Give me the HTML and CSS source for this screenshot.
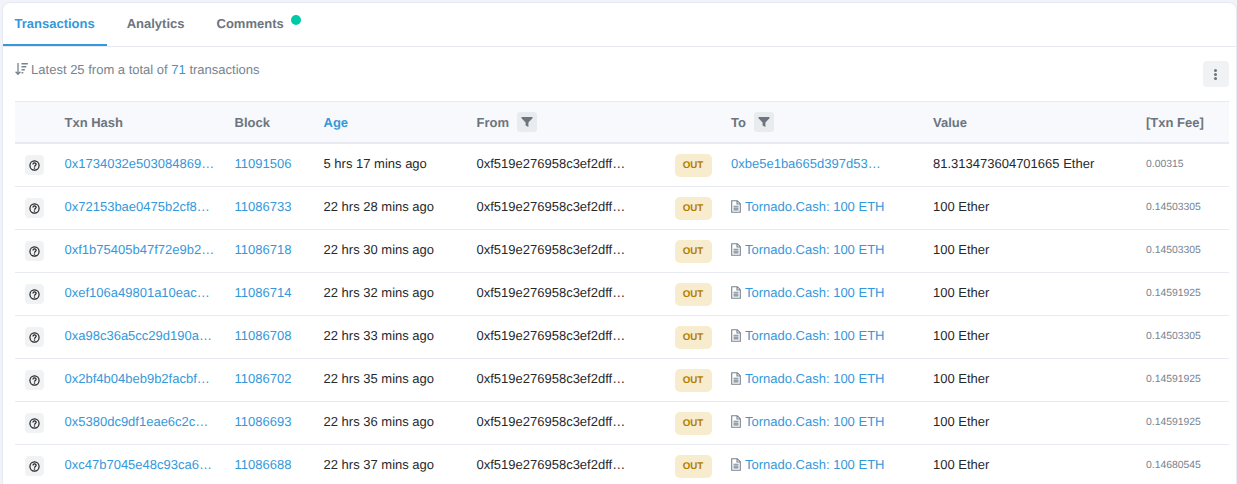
FILE: index.html
```html
<!DOCTYPE html>
<html lang="en">

<head>
    <meta charset="UTF-8">
    <title>Transactions</title>
    <link rel="stylesheet" href="styles.css">
</head>

<body>
    <svg class="defs">
        <symbol id="question" viewBox="0 0 12 12">
            <circle cx="6" cy="6" r="5" fill="none" stroke="currentColor" stroke-width="1.3" />
            <path d="M4.3 4.8c0-2.2 3.5-2.2 3.5-.1 0 1.3-1.7 1.2-1.8 2.6" fill="none" stroke="currentColor" stroke-width="1.3" />
            <rect x="5.3" y="8.1" width="1.4" height="1.4" fill="currentColor" />
        </symbol>
        <symbol id="filter" viewBox="0 0 12 12">
            <path d="M.5 1h11v1.2L7.4 6.4V11L4.6 9.4v-3L.5 2.2z" fill="currentColor" />
        </symbol>
        <symbol id="file" viewBox="0 0 10 13">
            <path d="M.7.7h5.6l3 3v8.6H.7zM6 .9v3.1h3.2M2.5 6.3h5M2.5 8.1h5M2.5 9.9h5" fill="none" stroke="currentColor" stroke-width="1.1" />
        </symbol>
    </svg>

    <div class="card">
        <!-- Tabs -->
        <div class="tabs">
            <a class="tab active">Transactions</a>
            <a class="tab">Analytics</a>
            <a class="tab">Comments<span class="dot"></span></a>
        </div>

        <div class="summary">
            <p class="summary-text">
                <svg class="sort-icon" viewBox="0 0 13 13">
                    <path d="M3 .5v11M.6 9.2 3 11.8l2.4-2.6" fill="none" stroke="currentColor" stroke-width="1.3" />
                    <path d="M6.5 1.2h6.3M6.5 4.2h4.8M6.5 7.2h3.3M6.5 10.2h1.8" fill="none" stroke="currentColor" stroke-width="1.5" />
                </svg>
                Latest 25 from a total of <a>71</a> transactions
            </p>
            <button class="more-btn"><span></span><span></span><span></span></button>
        </div>

        <table class="txn-table">
            <colgroup>
                <col class="c-icon"><col class="c-hash"><col class="c-block"><col class="c-age"><col class="c-from">
                <col class="c-dir"><col class="c-to"><col class="c-value"><col class="c-fee">
            </colgroup>
            <thead>
                <tr>
                    <th></th>
                    <th>Txn Hash</th>
                    <th>Block</th>
                    <th><a>Age</a></th>
                    <th><div class="th-filter">From <span class="filter-btn"><svg><use href="#filter" /></svg></span></div></th>
                    <th></th>
                    <th><div class="th-filter">To <span class="filter-btn"><svg><use href="#filter" /></svg></span></div></th>
                    <th>Value</th>
                    <th>[Txn Fee]</th>
                </tr>
            </thead>
            <tbody>
                <tr>
                    <td><span class="status"><svg><use href="#question" /></svg></span></td>
                    <td><a>0x1734032e503084869…</a></td>
                    <td><a>11091506</a></td>
                    <td>5 hrs 17 mins ago</td>
                    <td>0xf519e276958c3ef2dff…</td>
                    <td><span class="badge">OUT</span></td>
                    <td><a>0xbe5e1ba665d397d53…</a></td>
                    <td>81.313473604701665 Ether</td>
                    <td class="fee">0.00315</td>
                </tr>
                <tr>
                    <td><span class="status"><svg><use href="#question" /></svg></span></td>
                    <td><a>0x72153bae0475b2cf8…</a></td>
                    <td><a>11086733</a></td>
                    <td>22 hrs 28 mins ago</td>
                    <td>0xf519e276958c3ef2dff…</td>
                    <td><span class="badge">OUT</span></td>
                    <td><svg class="file-icon"><use href="#file" /></svg><a>Tornado.Cash: 100 ETH</a></td>
                    <td>100 Ether</td>
                    <td class="fee">0.14503305</td>
                </tr>
                <tr>
                    <td><span class="status"><svg><use href="#question" /></svg></span></td>
                    <td><a>0xf1b75405b47f72e9b2…</a></td>
                    <td><a>11086718</a></td>
                    <td>22 hrs 30 mins ago</td>
                    <td>0xf519e276958c3ef2dff…</td>
                    <td><span class="badge">OUT</span></td>
                    <td><svg class="file-icon"><use href="#file" /></svg><a>Tornado.Cash: 100 ETH</a></td>
                    <td>100 Ether</td>
                    <td class="fee">0.14503305</td>
                </tr>
                <tr>
                    <td><span class="status"><svg><use href="#question" /></svg></span></td>
                    <td><a>0xef106a49801a10eac…</a></td>
                    <td><a>11086714</a></td>
                    <td>22 hrs 32 mins ago</td>
                    <td>0xf519e276958c3ef2dff…</td>
                    <td><span class="badge">OUT</span></td>
                    <td><svg class="file-icon"><use href="#file" /></svg><a>Tornado.Cash: 100 ETH</a></td>
                    <td>100 Ether</td>
                    <td class="fee">0.14591925</td>
                </tr>
                <tr>
                    <td><span class="status"><svg><use href="#question" /></svg></span></td>
                    <td><a>0xa98c36a5cc29d190a…</a></td>
                    <td><a>11086708</a></td>
                    <td>22 hrs 33 mins ago</td>
                    <td>0xf519e276958c3ef2dff…</td>
                    <td><span class="badge">OUT</span></td>
                    <td><svg class="file-icon"><use href="#file" /></svg><a>Tornado.Cash: 100 ETH</a></td>
                    <td>100 Ether</td>
                    <td class="fee">0.14503305</td>
                </tr>
                <tr>
                    <td><span class="status"><svg><use href="#question" /></svg></span></td>
                    <td><a>0x2bf4b04beb9b2facbf…</a></td>
                    <td><a>11086702</a></td>
                    <td>22 hrs 35 mins ago</td>
                    <td>0xf519e276958c3ef2dff…</td>
                    <td><span class="badge">OUT</span></td>
                    <td><svg class="file-icon"><use href="#file" /></svg><a>Tornado.Cash: 100 ETH</a></td>
                    <td>100 Ether</td>
                    <td class="fee">0.14591925</td>
                </tr>
                <tr>
                    <td><span class="status"><svg><use href="#question" /></svg></span></td>
                    <td><a>0x5380dc9df1eae6c2c…</a></td>
                    <td><a>11086693</a></td>
                    <td>22 hrs 36 mins ago</td>
                    <td>0xf519e276958c3ef2dff…</td>
                    <td><span class="badge">OUT</span></td>
                    <td><svg class="file-icon"><use href="#file" /></svg><a>Tornado.Cash: 100 ETH</a></td>
                    <td>100 Ether</td>
                    <td class="fee">0.14591925</td>
                </tr>
                <tr>
                    <td><span class="status"><svg><use href="#question" /></svg></span></td>
                    <td><a>0xc47b7045e48c93ca6…</a></td>
                    <td><a>11086688</a></td>
                    <td>22 hrs 37 mins ago</td>
                    <td>0xf519e276958c3ef2dff…</td>
                    <td><span class="badge">OUT</span></td>
                    <td><svg class="file-icon"><use href="#file" /></svg><a>Tornado.Cash: 100 ETH</a></td>
                    <td>100 Ether</td>
                    <td class="fee">0.14680545</td>
                </tr>
            </tbody>
        </table>
    </div>
</body>

</html>
```

FILE: styles.css
```css
html,
body {
    height: 100%;
}

body {
    margin: 0;
    padding: 2px 0 0 2px;
    box-sizing: border-box;
    overflow: hidden;
    background-color: #f1f3f9;
    font-family: "Liberation Sans", Arial, sans-serif;
    font-size: 13px;
    color: #26292c;
    text-rendering: geometricPrecision;
}

.defs {
    display: none;
}

a {
    color: #3498db;
    text-decoration: none;
}

.card {
    background-color: #fff;
    border: 1px solid #e7eaf3;
    border-radius: 8px 8px 0 0;
    height: 481px;
    overflow: hidden;
}

.tabs {
    display: flex;
    height: 43px;
    border-bottom: 1px solid #e7eaf3;
}

.tab {
    position: relative;
    padding: 13px 12px 0 11.5px;
    margin-right: 8.5px;
    font-weight: bold;
    color: #6c757e;
}

.tab.active {
    color: #3498db;
    box-shadow: inset 0 -2px 0 #3498db;
}

.dot {
    position: absolute;
    top: 12px;
    right: -5px;
    width: 10px;
    height: 10px;
    border-radius: 50%;
    background-color: #00c9a7;
}

.summary {
    display: flex;
    justify-content: space-between;
    align-items: flex-start;
    height: 40px;
    padding: 14px 7px 0 11.5px;
}

.summary-text {
    margin: 0;
    padding-top: 1px;
    color: #77838f;
}

.sort-icon {
    width: 13px;
    height: 14px;
    vertical-align: -2px;
    color: #77838f;
}

.more-btn {
    display: flex;
    flex-direction: column;
    align-items: center;
    justify-content: center;
    gap: 1px;
    width: 26px;
    height: 26px;
    padding: 0 1px 0 0;
    border: none;
    border-radius: 4px;
    background-color: #f1f2f4;
}

.more-btn span {
    width: 3px;
    height: 3px;
    border-radius: 50%;
    background-color: #6c757e;
}

.txn-table {
    width: 1214px;
    margin-left: 12px;
    border-collapse: collapse;
    table-layout: fixed;
}

.c-icon { width: 39.5px; }
.c-hash { width: 170px; }
.c-block { width: 89px; }
.c-age { width: 153px; }
.c-from { width: 199px; }
.c-dir { width: 55.5px; }
.c-to { width: 202px; }
.c-value { width: 213px; }
.c-fee { width: 93px; }

.txn-table th {
    height: 40px;
    padding: 0 10px;
    text-align: left;
    font-weight: bold;
    color: #6c757e;
    background-color: #f8f9fc;
    border-top: 1px solid #e7eaf3;
    border-bottom: 2px solid #e7eaf3;
}

.th-filter {
    display: flex;
    align-items: center;
    gap: 8px;
}

.txn-table td {
    height: 38px;
    padding: 0 10px 4px;
    white-space: nowrap;
    border-bottom: 1px solid #e7eaf3;
}

.txn-table td.fee {
    height: 40px;
    padding-bottom: 2px;
    font-size: 10.4px;
    color: #77838f;
}

.filter-btn {
    display: flex;
    align-items: center;
    justify-content: center;
    width: 20px;
    height: 20px;
    border-radius: 3px;
    background-color: #e9ecef;
}

.filter-btn svg {
    width: 12px;
    height: 12px;
    color: #6c757e;
}

.status {
    display: flex;
    align-items: center;
    justify-content: center;
    width: 19px;
    height: 20px;
    margin-top: 4px;
    border-radius: 4px;
    background-color: #f1f2f4;
}

.status svg {
    width: 11px;
    height: 11px;
    color: #1e2022;
}

.badge {
    display: block;
    width: 37px;
    height: 23px;
    margin: 5px 0 0 -1px;
    border-radius: 5px;
    line-height: 23px;
    text-align: center;
    font-size: 9.75px;
    font-weight: bold;
    color: #b47d00;
    background-color: #f8ecce;
}

.file-icon {
    width: 10px;
    height: 13px;
    margin-right: 4px;
    vertical-align: -2px;
    color: #77838f;
}
```
